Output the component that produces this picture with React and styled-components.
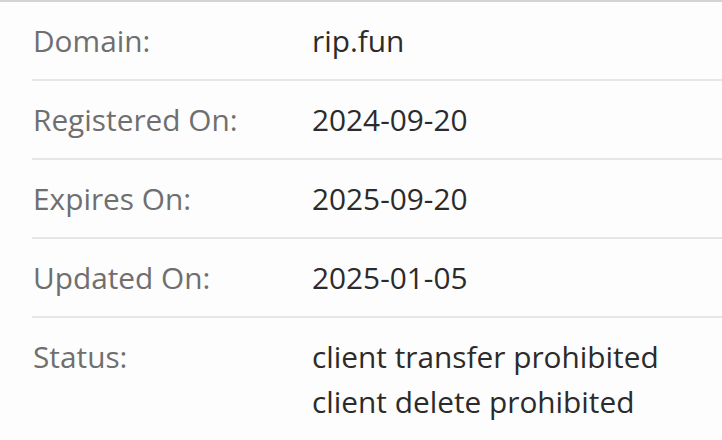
import React from "react"
import styled, { createGlobalStyle } from "styled-components"

const GlobalStyle = createGlobalStyle`
    html, body
    {
        margin: 0;
        padding: 0;
        background: #fdfdfd;
    }

    body
    {
        font-family: "Open Sans", "Liberation Sans", sans-serif;
    }
`;

const Panel = styled.div`
    width: 722px;
    height: 440px;
    overflow: hidden;
    border-top: 2px solid #d4d4d4;
    box-sizing: border-box;
`;

const DetailList = styled.dl`
    margin: 0 0 0 32px;
    padding: 0;
`;

const Row = styled.div`
    display: grid;
    grid-template-columns: 279px 1fr;
    padding: 16px 0 16px 1px;
    font-size: 29.8px;
    line-height: 45px;
    border-bottom: ${props => props.$last ? "none" : "2px solid #e6e6e6"};
`;

const Label = styled.dt`
    margin: 0;
    color: #6f6f6f;
`;

const Value = styled.dd`
    margin: 0;
    color: #2b2b2b;
`;

const rows = [
    ["Domain:", ["rip.fun"]],
    ["Registered On:", ["2024-09-20"]],
    ["Expires On:", ["2025-09-20"]],
    ["Updated On:", ["2025-01-05"]],
    ["Status:", ["client transfer prohibited", "client delete prohibited"]],
];

export default function App() {
    return (
        <>
            <GlobalStyle />
            <Panel>
                <DetailList>
                    {rows.map(([label, values], i) => (
                        <Row key={label} $last={i === rows.length - 1}>
                            <Label>{label}</Label>
                            <Value>
                                {values.map(v => <div key={v}>{v}</div>)}
                            </Value>
                        </Row>
                    ))}
                </DetailList>
            </Panel>
        </>
    );
}
